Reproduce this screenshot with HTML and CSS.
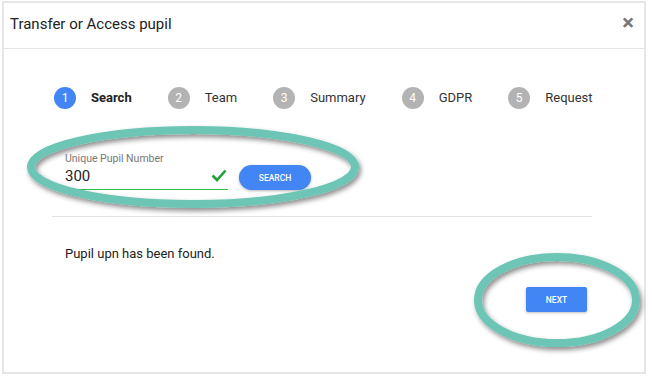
FILE: index.html
```html
<!DOCTYPE html>
<html lang="en">
<head>
    <meta charset="UTF-8">
    <meta name="viewport" content="width=device-width, initial-scale=1.0">
    <title>Transfer or Access pupil</title>
    <link rel="stylesheet" href="styles.css">
</head>
<body>
    <div class="modal">
        <div class="modal-header">
            <h4 class="modal-title">Transfer or Access pupil</h4>
            <span class="close">&times;</span>
        </div>
        <div class="modal-body">
            <div class="stepper">
                <div class="step active"><span class="num">1</span><span class="label">Search</span></div>
                <div class="step"><span class="num">2</span><span class="label">Team</span></div>
                <div class="step"><span class="num">3</span><span class="label">Summary</span></div>
                <div class="step"><span class="num">4</span><span class="label">GDPR</span></div>
                <div class="step"><span class="num">5</span><span class="label">Request</span></div>
            </div>

            <div class="search-row">
                <div class="field">
                    <label for="upn">Unique Pupil Number</label>
                    <div class="field-input">
                        <input type="text" id="upn" value="300">
                        <svg class="check" width="16" height="13" viewBox="0 0 16 13"><path d="M1.5 6.5 L6 11 L14.5 1.5" fill="none" stroke="#21a038" stroke-width="2.6"/></svg>
                    </div>
                </div>
                <button class="btn-search">SEARCH</button>
            </div>

            <hr class="divider">

            <p class="result">Pupil upn has been found.</p>

            <div class="actions">
                <button class="btn-next">NEXT</button>
            </div>
        </div>
    </div>

    <svg class="highlights" width="652" height="377" viewBox="0 0 652 377">
        <defs>
            <filter id="shadow" x="-10%" y="-30%" width="120%" height="160%">
                <feDropShadow dx="2" dy="3" stdDeviation="2.5" flood-color="#000" flood-opacity="0.45"/>
            </filter>
        </defs>
        <ellipse cx="193" cy="167" rx="162" ry="37" fill="none" stroke="#6cc5b5" stroke-width="8" filter="url(#shadow)"/>
        <ellipse cx="557" cy="300" rx="79" ry="43" fill="none" stroke="#6cc5b5" stroke-width="8" filter="url(#shadow)"/>
    </svg>
</body>
</html>
```

FILE: styles.css
```css
body {
  margin: 0;
  background: #fff;
  font-family: Roboto, "Liberation Sans", sans-serif;
  color: #222;
}

/* Dialog box */
.modal {
  position: relative;
  margin: 1px 6px 0 2px;
  height: 369px;
  border: 2px solid #e6e6e6;
  background: #fff;
}

.modal-header {
  display: flex;
  align-items: center;
  justify-content: space-between;
  height: 45px;
  padding: 0 12px 0 6px;
  border-bottom: 1px solid #e6e6e6;
}

.modal-title {
  margin: 0 0 3px 0;
  font-size: 15px;
  font-weight: 400;
  color: #222;
}

.close {
  font-size: 22px;
  font-weight: 700;
  color: #777;
  line-height: 1;
  margin-bottom: 5px;
  margin-right: -2px;
}

.modal-body {
  padding: 0 52px 0 48px;
}

/* Steps */
.stepper {
  display: flex;
  align-items: center;
  height: 97px;
  padding-left: 2px;
}

.step {
  display: flex;
  align-items: center;
  font-size: 13px;
  color: #333;
}

.step + .step {
  margin-left: 36px;
}

.num {
  width: 22px;
  height: 22px;
  border-radius: 50%;
  background: #b3b3b3;
  color: #fff;
  font-size: 12px;
  display: flex;
  align-items: center;
  justify-content: center;
  margin-right: 15px;
}

.step.active .num {
  background: #4285f4;
}

.step.active .label {
  font-weight: 700;
  color: #222;
}

/* Search field */
.search-row {
  display: flex;
  align-items: flex-end;
  padding-left: 13px;
  height: 44px;
}

.field {
  width: 163px;
}

.field label {
  display: block;
  font-size: 10.5px;
  color: #777;
  margin-bottom: 1px;
}

.field-input {
  display: flex;
  align-items: center;
  border-bottom: 1px solid #2bc04a;
  height: 23px;
}

.field-input input {
  flex: 1;
  border: none;
  outline: none;
  padding: 0 0 3px 0;
  font-family: inherit;
  font-size: 15px;
  color: #222;
  width: 100px;
}

.check {
  margin-right: 1px;
  margin-bottom: 5px;
}

.btn-search {
  margin: 0 0 0 11px;
  width: 72px;
  height: 25px;
  border: none;
  border-radius: 13px;
  background: #4285f4;
  color: #fff;
  font-family: inherit;
  font-size: 8.5px;
  font-weight: 500;
  box-shadow: 0 1px 3px rgba(0, 0, 0, 0.3);
}

.divider {
  border: none;
  border-top: 1px solid #e3e3e3;
  margin: 26px 0 0 0;
}

.result {
  font-size: 13px;
  color: #222;
  margin: 29px 0 0 13px;
}

.actions {
  display: flex;
  justify-content: flex-end;
  margin-top: 26px;
  padding-right: 5px;
}

.btn-next {
  width: 61px;
  height: 25px;
  border: none;
  border-radius: 2px;
  background: #4285f4;
  color: #fff;
  font-family: inherit;
  font-size: 8.5px;
  font-weight: 500;
  box-shadow: 0 1px 3px rgba(0, 0, 0, 0.25);
}

/* Annotation ellipses drawn over the dialog */
.highlights {
  position: absolute;
  left: 0;
  top: 0;
  pointer-events: none;
}
```
